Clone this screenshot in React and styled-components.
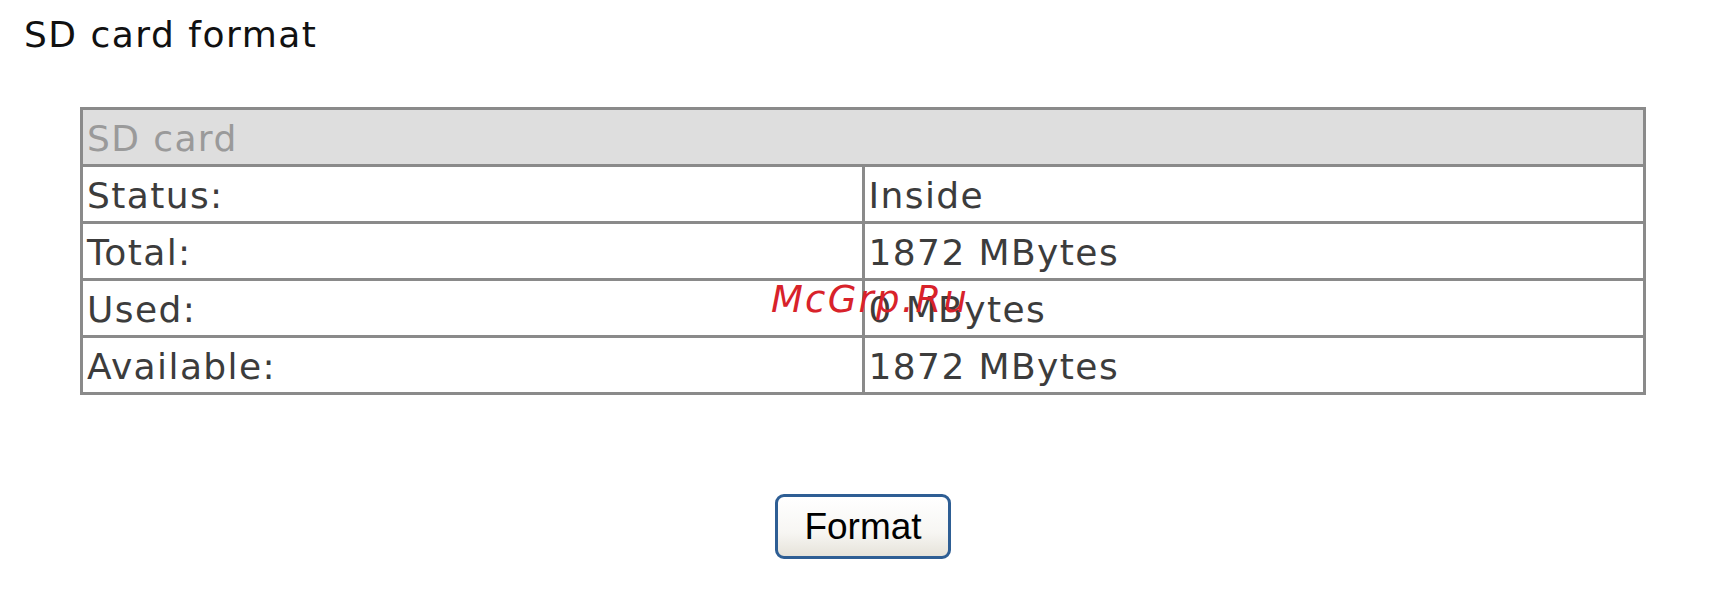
import React from 'react';
import styled, { createGlobalStyle } from 'styled-components';

const rows = [
  { label: 'Status:', value: 'Inside' },
  { label: 'Total:', value: '1872 MBytes' },
  { label: 'Used:', value: '0 MBytes' },
  { label: 'Available:', value: '1872 MBytes' },
];

function App() {
  return (
    <Page>
      <GlobalStyle />
      <Title>SD card format</Title>
      <TableWrap>
        <InfoTable>
          <tbody>
            <tr>
              <HeadCell colSpan={2}>SD card</HeadCell>
            </tr>
            {rows.map((r) => (
              <tr key={r.label}>
                <Cell>{r.label}</Cell>
                <Cell>{r.value}</Cell>
              </tr>
            ))}
          </tbody>
        </InfoTable>
        <Watermark>McGrp.Ru</Watermark>
      </TableWrap>
      <ButtonRow>
        <FormatButton type="button">Format</FormatButton>
      </ButtonRow>
    </Page>
  );
}

export default App;

const GlobalStyle = createGlobalStyle`
  html, body {
    margin: 0;
    padding: 0;
    background: #fff;
  }
`;

const Page = styled.div`
  width: 1726px;
  height: 597px;
  padding-top: 14px;
  box-sizing: border-box;
  font-family: "DejaVu Sans", Verdana, sans-serif;
`;

const Title = styled.h1`
  margin: 0 0 51px 24px;
  font-size: 36px;
  line-height: 42px;
  font-weight: normal;
  letter-spacing: 1.5px;
  color: #111;
`;

const TableWrap = styled.div`
  position: relative;
  margin: 0 80px;
`;

const InfoTable = styled.table`
  width: 100%;
  border-collapse: collapse;
  table-layout: fixed;
  border: 3px solid #8a8a8a;
`;

const HeadCell = styled.td`
  height: 51px;
  padding: 3px 0 0 4px;
  background: #dedede;
  border: 3px solid #8a8a8a;
  font-size: 36px;
  letter-spacing: 1.4px;
  color: #9a9a9a;
  line-height: 51px;
`;

const Cell = styled.td`
  height: 50px;
  padding: 4px 0 0 4px;
  border: 3px solid #8a8a8a;
  font-size: 36px;
  letter-spacing: 1.4px;
  color: #3c3c3c;
  line-height: 50px;
  white-space: nowrap;
`;

const Watermark = styled.span`
  position: absolute;
  left: 691px;
  top: 172px;
  font-family: "DejaVu Sans", sans-serif;
  font-style: italic;
  font-size: 37px;
  line-height: 42px;
  letter-spacing: 2.2px;
  color: #d8222a;
  pointer-events: none;
`;

const ButtonRow = styled.div`
  display: flex;
  justify-content: center;
  margin-top: 99px;
`;

const FormatButton = styled.button`
  width: 176px;
  height: 65px;
  border: 3px solid #2e5e94;
  border-radius: 9px;
  background: linear-gradient(#ffffff 0%, #f7f6f3 60%, #e6e3da 100%);
  font-family: "Liberation Sans", Arial, sans-serif;
  font-size: 37px;
  color: #000;
  padding: 0;
  cursor: pointer;
`;
